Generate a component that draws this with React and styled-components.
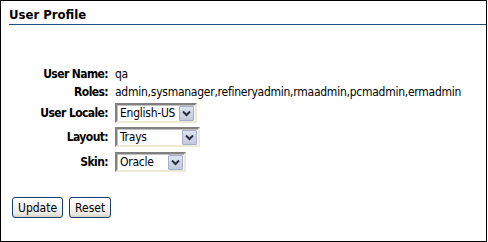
import React from "react";
import styled, { createGlobalStyle } from "styled-components";

const GlobalStyle = createGlobalStyle`
  body {
    margin: 0;
    background: #fff;
    font-family: "DejaVu Sans Condensed", "DejaVu Sans", sans-serif;
    font-size: 12px;
    color: #000;
  }
`;

const Frame = styled.div`
  box-sizing: border-box;
  width: 487px;
  height: 242px;
  border: 1px solid #000;
  background: #fff;
  display: flex;
  flex-direction: column;
`;

const Header = styled.h1`
  margin: 0 0 0 8px;
  padding: 6px 0 2px 0;
  font-size: 13px;
  font-weight: bold;
  line-height: 15px;
  border-bottom: 1px solid #1f4f80;
`;

const Form = styled.div`
  display: grid;
  grid-template-columns: 107px auto;
  column-gap: 7px;
  align-items: center;
  margin-top: 40px;
`;

const Label = styled.div`
  font-weight: bold;
  text-align: right;
  letter-spacing: -0.6px;
  height: ${(p) => p.$h}px;
  line-height: ${(p) => p.$h}px;
`;

const Value = styled.div`
  height: ${(p) => p.$h}px;
  line-height: ${(p) => p.$h}px;
  display: flex;
  align-items: center;
  white-space: nowrap;
  letter-spacing: -0.25px;
`;

const SelectBox = styled.div`
  box-sizing: border-box;
  width: ${(p) => p.$w}px;
  height: 20px;
  display: flex;
  align-items: center;
  border-top: 2px solid #808080;
  border-left: 2px solid #808080;
  border-right: 2px solid #ece9d8;
  border-bottom: 2px solid #ece9d8;
  box-shadow: inset 1px 1px 0 #c0c0c0;
  background: #fff;
`;

const SelectText = styled.span`
  flex: 1;
  padding-left: 3px;
  line-height: 16px;
`;

const ArrowBtn = styled.span`
  box-sizing: border-box;
  width: 15px;
  height: 15px;
  margin-right: 1px;
  display: flex;
  align-items: center;
  justify-content: center;
  background: linear-gradient(#dfe3ef, #c3c9dc);
  border: 1px solid #a3adc8;
  border-radius: 1px;
`;

const Buttons = styled.div`
  display: flex;
  gap: 6px;
  margin: 22px 0 0 11px;
`;

const Button = styled.button`
  box-sizing: border-box;
  height: 21px;
  padding: 0 5px;
  font-family: inherit;
  font-size: 12px;
  color: #000;
  border: 1px solid #1c3e6a;
  border-radius: 3px;
  background: linear-gradient(#ffffff, #ecebe6 80%, #d6d2c6);
`;

function Select({ value, width }) {
  return (
    <SelectBox $w={width}>
      <SelectText>{value}</SelectText>
      <ArrowBtn>
        <svg width="9" height="7" viewBox="0 0 9 7">
          <path d="M1 1.5 L4.5 5 L8 1.5" fill="none" stroke="#2a2a40" strokeWidth="2" />
        </svg>
      </ArrowBtn>
    </SelectBox>
  );
}

export default function App() {
  return (
    <>
      <GlobalStyle />
      <Frame>
        <Header>User Profile</Header>
        <Form>
          <Label $h={18}>User Name:</Label>
          <Value $h={18}>qa</Value>
          <Label $h={18}>Roles:</Label>
          <Value $h={18}>admin,sysmanager,refineryadmin,rmaadmin,pcmadmin,ermadmin</Value>
          <Label $h={24}>User Locale:</Label>
          <Value $h={24}>
            <Select value="English-US" width={82} />
          </Value>
          <Label $h={24}>Layout:</Label>
          <Value $h={24}>
            <Select value="Trays" width={85} />
          </Value>
          <Label $h={26}>Skin:</Label>
          <Value $h={26}>
            <Select value="Oracle" width={71} />
          </Value>
        </Form>
        <Buttons>
          <Button>Update</Button>
          <Button>Reset</Button>
        </Buttons>
      </Frame>
    </>
  );
}
